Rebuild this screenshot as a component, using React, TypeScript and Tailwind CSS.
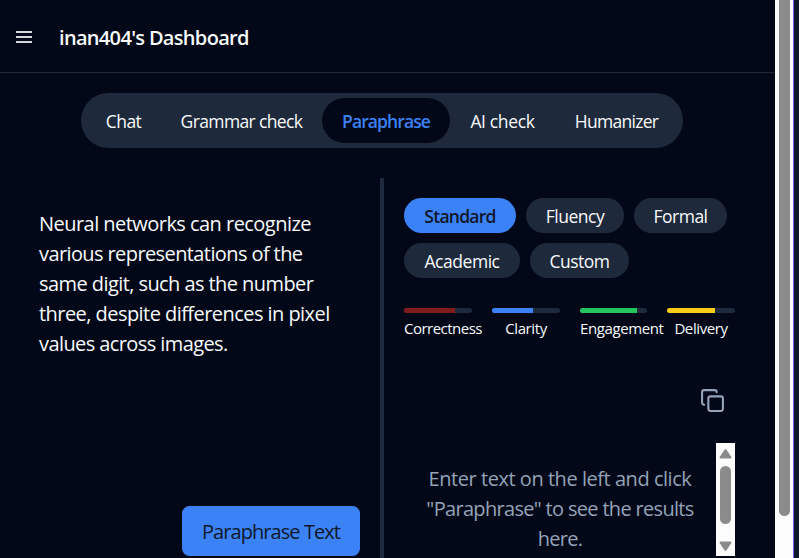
import { Copy } from "lucide-react";

const tabs = [
  { label: "Chat", box: "w-[75px]", text: "tracking-[-0.55px]" },
  { label: "Grammar check", box: "w-[161px]", text: "tracking-[-0.63px]" },
  { label: "Paraphrase", box: "w-[128px] rounded-full bg-[#020817] font-semibold text-[#3b82f6]", text: "tracking-[-0.9px]" },
  { label: "AI check", box: "w-[105px]", text: "tracking-[-0.35px]" },
  { label: "Humanizer", box: "w-[123px]", text: "tracking-[-0.7px]" },
];

const modes = [
  { label: "Standard", box: "w-[112px] bg-[#3b82f6] font-semibold text-[#0f172a]", text: "tracking-[-0.75px]" },
  { label: "Fluency", box: "w-[98px] bg-[#1e293b]", text: "tracking-[-0.45px]" },
  { label: "Formal", box: "w-[93px] bg-[#1e293b]", text: "tracking-[-0.5px]" },
  { label: "Academic", box: "w-[116px] bg-[#1e293b]", text: "tracking-[-0.45px]" },
  { label: "Custom", box: "w-[99px] bg-[#1e293b]", text: "tracking-[-0.5px]" },
];

const scores = [
  { label: "Correctness", fill: "w-[51px] bg-[#7f1d1d]", box: "w-[68px]", align: "self-start", text: "tracking-[-0.52px]" },
  { label: "Clarity", fill: "w-[41px] bg-[#3b82f6]", box: "w-[68px]", align: "self-center", text: "tracking-[-0.4px]" },
  { label: "Engagement", fill: "w-[57px] bg-[#22c55e]", box: "w-[67px]", align: "self-start", text: "tracking-[-0.4px]" },
  { label: "Delivery", fill: "w-[48px] bg-[#facc15]", box: "w-[68px]", align: "self-center", text: "tracking-[-0.4px]" },
];

const passage = [
  { line: "Neural networks can recognize", text: "tracking-[-0.54px]" },
  { line: "various representations of the", text: "tracking-[-0.6px]" },
  { line: "same digit, such as the number", text: "tracking-[-0.57px]" },
  { line: "three, despite differences in pixel", text: "tracking-[-0.55px]" },
  { line: "values across images.", text: "tracking-[-0.59px]" },
];

const hint = [
  { line: "Enter text on the left and click", text: "tracking-[-0.46px]" },
  { line: '"Paraphrase" to see the results', text: "tracking-[-0.68px]" },
  { line: "here.", text: "tracking-[-0.7px]" },
];

function Header() {
  return (
    <header className="flex h-[73px] items-center border-b border-[#1e293b] pl-4">
      <div className="flex w-4 flex-col gap-[3px] pt-[2px]">
        <span className="h-[2px] bg-[#d3d6da]" />
        <span className="h-[2px] bg-[#d3d6da]" />
        <span className="h-[2px] bg-[#d3d6da]" />
      </div>
      <h1 className="ml-[27px] pt-1 text-[20px] leading-[30px] font-semibold tracking-[-0.68px] whitespace-nowrap">
        inan404's Dashboard
      </h1>
    </header>
  );
}

function Tabs() {
  return (
    <nav className="mt-5 ml-[81px] flex h-[55px] w-[602px] rounded-full bg-[#1e293b] p-[5px] text-[17.5px]">
      {tabs.map((t) => (
        <button key={t.label} className={`flex h-[45px] items-center justify-center pt-[2px] whitespace-nowrap ${t.box}`}>
          <span className={t.text}>{t.label}</span>
        </button>
      ))}
    </nav>
  );
}

function ResultScrollbar() {
  return (
    <div className="flex h-[113px] w-[19px] flex-col items-center bg-[#fcfcfc]">
      <svg className="mt-[6px] h-[10px] w-[13px] shrink-0" viewBox="0 0 13 10" fill="#8b8b8b">
        <path d="M5.6.6Q6.5-.3 7.4.6L12.3 8Q12.8 9.3 11.5 9.5H1.5Q.2 9.3.7 8Z" />
      </svg>
      <div className="mt-[7px] h-[58px] w-[11px] shrink-0 rounded-full bg-[#8b8b8b]" />
      <svg className="mt-[17px] h-[10px] w-[13px] shrink-0" viewBox="0 0 13 10" fill="#8b8b8b">
        <path d="M5.6 9.4Q6.5 10.3 7.4 9.4L12.3 2Q12.8.7 11.5.5H1.5Q.2.7.7 2Z" />
      </svg>
    </div>
  );
}

function Editor() {
  return (
    <section className="flex w-[380px] flex-col pt-[31px] pl-[39px]">
      <p className="h-[297px] text-[20px] leading-[30px] whitespace-nowrap">
        {passage.map((p) => (
          <span key={p.line} className="block">
            <span className={p.text}>{p.line}</span>
          </span>
        ))}
      </p>
      <button className="ml-[143px] flex h-[50px] w-[178px] items-center justify-center rounded-[7.5px] bg-[#3b82f6] pt-[2px] text-[20px] whitespace-nowrap text-[#0f172a]">
        <span className="tracking-[-0.93px]">Paraphrase Text</span>
      </button>
    </section>
  );
}

function Results() {
  return (
    <section className="h-[380px] w-[395px] border-l-4 border-[#1e293b] pt-5 pl-5">
      <div className="flex w-[331px] flex-wrap gap-[10px] text-[17.5px]">
        {modes.map((m) => (
          <button key={m.label} className={`flex h-[35px] items-center justify-center rounded-full pt-[2px] whitespace-nowrap ${m.box}`}>
            <span className={m.text}>{m.label}</span>
          </button>
        ))}
      </div>
      <div className="mt-[30px] flex gap-5">
        {scores.map((s) => (
          <div key={s.label} className={`flex flex-col ${s.box}`}>
            <div className="h-[5px] overflow-hidden rounded-full bg-[#1e293b]">
              <div className={`h-full ${s.fill}`} />
            </div>
            <span className={`mt-[5px] text-[15px] leading-5 whitespace-nowrap ${s.align} ${s.text}`}>{s.label}</span>
          </div>
        ))}
      </div>
      <div className="mt-[50px] flex w-[321px] justify-end">
        <Copy size={25} className="text-[#94a3b8]" />
      </div>
      <div className="mt-[30px] flex w-[331px]">
        <p className="w-[312px] pt-[21px] text-center text-[20px] leading-[30px] whitespace-nowrap text-[#94a3b8]">
          {hint.map((h) => (
            <span key={h.line} className="block">
              <span className={h.text}>{h.line}</span>
            </span>
          ))}
        </p>
        <ResultScrollbar />
      </div>
    </section>
  );
}

export default function App() {
  return (
    <div className="flex h-[558px] w-[799px] overflow-hidden bg-[#020817] font-['Open_Sans','Noto_Sans',sans-serif] text-slate-50">
      <main className="w-[775px] shrink-0">
        <Header />
        <Tabs />
        <div className="mt-[30px] flex">
          <Editor />
          <Results />
        </div>
      </main>
      <aside className="w-[18px] shrink-0 bg-[#fcfcfc] pl-1">
        <div className="h-[516px] w-[11px] rounded-b-full bg-[#8b8b8b]" />
      </aside>
      <div className="w-[6px] shrink-0 border-l border-[#6d5ce0] bg-[#0f172a]" />
    </div>
  );
}
